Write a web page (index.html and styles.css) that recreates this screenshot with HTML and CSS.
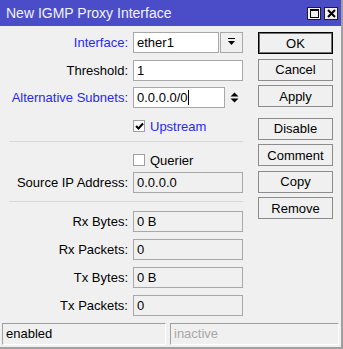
FILE: index.html
```html
<!DOCTYPE html>
<html lang="en-US">
  <head>
    <title>New IGMP Proxy Interface</title>
    <meta charset="utf-8" />
    <link rel="stylesheet" href="styles.css">
  </head>
  <body>
    <div class="window">
      <div class="titleBar">
        <span class="titleText">New IGMP Proxy Interface</span>
        <div class="titleButtons">
          <div class="tbButton">
            <svg width="9" height="9" viewBox="0 0 9 9"><rect x="0.5" y="0.5" width="8" height="8" fill="none" stroke="#000" stroke-width="1" /><rect x="0" y="0" width="9" height="2" fill="#000" /></svg>
          </div>
          <div class="tbButton">
            <svg width="9" height="9" viewBox="0 0 9 9"><path d="M1 1 L8 8 M8 1 L1 8" stroke="#000" stroke-width="2" /></svg>
          </div>
        </div>
      </div>

      <div class="content">
        <div class="form">
          <div class="row">
            <label class="label blue">Interface:</label>
            <div class="field short">ether1</div>
            <div class="dropButton">
              <svg width="9" height="9" viewBox="0 0 9 9"><rect x="1" y="0" width="7" height="1" fill="#000" /><path d="M1 3 H8 L4.5 7 Z" fill="#000" /></svg>
            </div>
          </div>
          <div class="row">
            <label class="label">Threshold:</label>
            <div class="field">1</div>
          </div>
          <div class="row">
            <label class="label blue">Alternative Subnets:</label>
            <div class="field subnet">0.0.0.0/0<span class="caret"></span></div>
            <div class="spinner">
              <svg width="9" height="11" viewBox="0 0 9 11"><path d="M0.5 4.5 L4.5 0.5 L8.5 4.5 Z M0.5 6.5 L4.5 10.5 L8.5 6.5 Z" fill="#000" /></svg>
            </div>
          </div>
          <div class="checkRow first">
            <span class="checkBox">
              <svg width="9" height="9" viewBox="0 0 9 9"><path d="M1 4 L3.5 6.5 L8 1.5" fill="none" stroke="#000" stroke-width="2" /></svg>
            </span>
            <span class="checkLabel blue">Upstream</span>
          </div>
          <div class="separator"></div>
          <div class="checkRow second">
            <span class="checkBox"></span>
            <span class="checkLabel">Querier</span>
          </div>
          <div class="row">
            <label class="label">Source IP Address:</label>
            <div class="field disabled">0.0.0.0</div>
          </div>
          <div class="separator lower"></div>
          <div class="row stat">
            <label class="label">Rx Bytes:</label>
            <div class="field disabled">0 B</div>
          </div>
          <div class="row stat">
            <label class="label">Rx Packets:</label>
            <div class="field disabled">0</div>
          </div>
          <div class="row stat">
            <label class="label">Tx Bytes:</label>
            <div class="field disabled">0 B</div>
          </div>
          <div class="row stat">
            <label class="label">Tx Packets:</label>
            <div class="field disabled">0</div>
          </div>
        </div>

        <div class="buttons">
          <button class="btn default">OK</button>
          <button class="btn">Cancel</button>
          <button class="btn">Apply</button>
          <button class="btn spaced">Disable</button>
          <button class="btn">Comment</button>
          <button class="btn">Copy</button>
          <button class="btn">Remove</button>
        </div>
      </div>

      <div class="statusBar">
        <div class="status">enabled</div>
        <div class="status grey">inactive</div>
      </div>
    </div>
  </body>
</html>
```

FILE: styles.css
```css
* {
  margin: 0;
  padding: 0;
  box-sizing: border-box;
}

body {
  background-color: #f0f0f0;
  font-family: "Liberation Sans", Arial, sans-serif;
  font-size: 13px;
  color: #000;
}

.window {
  width: 343px;
  height: 349px;
  background-color: #f0f0f0;
  border-right: 2px solid #a0a0a0;
  border-bottom: 2px solid #a0a0a0;
  display: flex;
  flex-direction: column;
}

.titleBar {
  height: 26px;
  background-color: #4b4dc8;
  display: flex;
  align-items: center;
  justify-content: space-between;
  padding-left: 6px;
  padding-right: 3px;
}

.titleText {
  color: #f2f2ff;
  font-size: 14px;
}

.titleButtons {
  display: flex;
  gap: 3px;
  margin-top: 1px;
}

.tbButton {
  width: 14px;
  height: 13px;
  background-color: #f0f0f0;
  border: 1px solid #202020;
  display: flex;
  align-items: center;
  justify-content: center;
}

.content {
  display: flex;
  flex: 1;
  padding-top: 6px;
}

.form {
  width: 243px;
}

.row {
  display: flex;
  align-items: center;
  height: 21px;
  margin-bottom: 6.5px;
}

.row.stat {
  margin-bottom: 7px;
}

.label {
  width: 128px;
  text-align: right;
  margin-right: 5px;
  white-space: nowrap;
}

.blue {
  color: #2828f5;
}

.field {
  width: 110px;
  height: 21px;
  background-color: #fff;
  border: 1px solid #a8a8a8;
  padding-left: 3px;
  line-height: 19px;
  white-space: nowrap;
}

.field.short {
  width: 86px;
}

.field.subnet {
  width: 92px;
}

.field.disabled {
  background-color: #f0f0f0;
}

.caret {
  display: inline-block;
  width: 1px;
  height: 15px;
  background-color: #000;
  vertical-align: -3px;
}

.dropButton {
  width: 23px;
  height: 21px;
  margin-left: 1px;
  border: 1px solid #a8a8a8;
  display: flex;
  align-items: center;
  justify-content: center;
}

.spinner {
  width: 18px;
  display: flex;
  justify-content: center;
}

.checkRow {
  display: flex;
  align-items: center;
  margin-left: 133px;
  height: 14px;
}

.checkRow.first {
  margin-top: 11px;
  margin-bottom: 8px;
}

.checkRow.second {
  margin-top: 11px;
  margin-bottom: 5px;
}

.checkBox {
  width: 12px;
  height: 12px;
  border: 1px solid #a0a0a0;
  background-color: #fff;
  display: flex;
  align-items: center;
  justify-content: center;
  margin-right: 5px;
}

.separator {
  height: 1px;
  margin-left: 9px;
  background-color: #d8d8d8;
}

.separator.lower {
  margin-top: 8px;
  margin-bottom: 9px;
}

.buttons {
  margin-left: 15px;
  width: 75px;
  display: flex;
  flex-direction: column;
  gap: 4.5px;
}

.btn {
  height: 22px;
  background-color: #f0f0f0;
  border: 1px solid #8c8c8c;
  font-family: "Liberation Sans", Arial, sans-serif;
  font-size: 13px;
  color: #000;
}

.btn.default {
  border: 1px solid #000;
  box-shadow: inset 0 0 0 1px #707070;
}

.btn.spaced {
  margin-top: 6px;
}

.statusBar {
  display: flex;
  gap: 4px;
  padding: 0 2px 2px 2px;
}

.status {
  width: 164px;
  height: 22px;
  border: 1px solid #a0a0a0;
  border-right-color: #fff;
  border-bottom-color: #fff;
  padding-left: 3px;
  line-height: 20px;
}

.status.grey {
  width: 169px;
  color: #a8a8a8;
}
```
